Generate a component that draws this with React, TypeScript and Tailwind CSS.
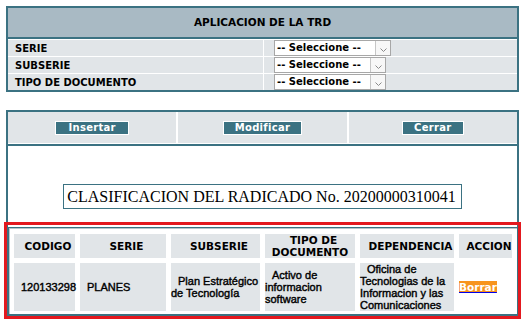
import React from 'react';

const campos = [
  { label: 'SERIE', width: 'w-[117px]' },
  { label: 'SUBSERIE', width: 'w-[112px]' },
  { label: 'TIPO DE DOCUMENTO', width: 'w-[112px]' },
];

const botones = [
  { label: 'Insertar', pad: 'px-[12px]' },
  { label: 'Modificar', pad: 'px-[11px]' },
  { label: 'Cerrar', pad: 'px-[11px]' },
];

const encabezados = ['CODIGO', 'SERIE', 'SUBSERIE', 'TIPO DE DOCUMENTO', 'DEPENDENCIA', 'ACCION'];

const fila = [
  '120133298',
  'PLANES',
  'Plan Estratégico de Tecnología',
  'Activo de informacion software',
  'Oficina de Tecnologias de la Informacion y las Comunicaciones',
];

function Select({ width }: { width: string }) {
  return (
    <div className={`${width} h-[16px] flex bg-white border border-[#a7a7a7]`}>
      <span className="flex-1 pl-[2px] text-[10px] leading-[14px] font-bold text-black whitespace-nowrap">
        -- Seleccione --
      </span>
      <span className="w-[15px] flex items-end justify-center pb-[3px] border-l border-[#c6c6c6] bg-[#f7f7f7]">
        <svg width="7" height="4" viewBox="0 0 7 4">
          <polyline points="0.5,0.5 3.5,3.5 6.5,0.5" fill="none" stroke="#8a8a8a" strokeWidth="1" />
        </svg>
      </span>
    </div>
  );
}

export default function App() {
  return (
    <div className="relative w-[525px] h-[324px] overflow-hidden bg-white p-[6px] font-['DejaVu_Sans',Verdana,sans-serif] text-black">
      {/* Aplicacion de la TRD */}
      <div className="border-2 border-[#3b7282]">
        <div className="h-[31px] bg-[#a9bac4] border-b-2 border-[#3b7282] flex items-center justify-center text-[10.5px] font-bold">
          APLICACION DE LA TRD
        </div>
        <div className="pt-[1px] flex flex-col gap-[1px]">
          {campos.map((c) => (
            <div key={c.label} className="grid grid-cols-[255px_1fr] gap-[1px] h-[16px]">
              <div className="bg-[#e1e5e8] pl-[7px] flex items-center text-[10px] font-bold">{c.label}</div>
              <div className="bg-[#e1e5e8] pl-[10px] flex items-center">
                <Select width={c.width} />
              </div>
            </div>
          ))}
        </div>
      </div>

      {/* Botones y clasificacion */}
      <div className="mt-[18px] border-2 border-[#3b7282]">
        <div className="pb-[1px] border-b-2 border-[#3b7282] grid grid-cols-3 gap-[2px]">
          {botones.map((b) => (
            <div key={b.label} className="h-[31px] bg-[#e1e5e8] flex items-center justify-center">
              <button
                className={`h-[14px] ${b.pad} border border-white bg-[#3b7282] text-white text-[10px] leading-[12px] font-bold tracking-[0.3px]`}
              >
                {b.label}
              </button>
            </div>
          ))}
        </div>

        <div className="pt-[38px]">
          <div className="mx-auto w-fit h-[25px] pl-[3px] pr-[5px] flex items-center border border-[#3b7282] font-['Liberation_Serif','Times_New_Roman',serif] text-[16px] whitespace-nowrap">
            CLASIFICACION DEL RADICADO No. 20200000310041
          </div>

          <div className="mt-[18px] border-t border-l border-[#3b7282]">
            <div className="border-t border-l border-[#b9c5cb] pl-[4px] pt-[5px] pb-[3px]">
              <div className="grid grid-cols-[61px_86px_89px_90px_94px_53px] grid-rows-[24px_48px] gap-[5px]">
                {encabezados.map((h) => (
                  <div
                    key={h}
                    className="bg-[#e1e5e8] flex items-center justify-center text-center indent-[7px] text-[10.5px] leading-[12px] font-bold"
                  >
                    {h === 'TIPO DE DOCUMENTO' ? <span>TIPO DE DOCUMENTO</span> : <span className="whitespace-nowrap">{h}</span>}
                  </div>
                ))}
                {fila.map((d, i) => (
                  <div
                    key={i}
                    className="bg-[#e1e5e8] flex items-center font-['Liberation_Sans',Arial,sans-serif] text-[11px] leading-[12px] [-webkit-text-stroke:0.4px_#000]"
                  >
                    <span className={`block indent-[7px] ${i < 2 ? 'whitespace-nowrap' : ''}`}>{d}</span>
                  </div>
                ))}
                <div className="flex items-center">
                  <a href="#" className="text-[#0000ee] underline text-[10.5px] leading-[11px] font-bold">
                    <span className="bg-[#f7941d] text-white">Borrar</span>
                  </a>
                </div>
              </div>
            </div>
          </div>
        </div>
      </div>

      {/* Marco de resaltado */}
      <div className="absolute left-[4px] top-[222px] w-[517px] h-[97px] border-[3px] border-[#e3191f] pointer-events-none" />
    </div>
  );
}
